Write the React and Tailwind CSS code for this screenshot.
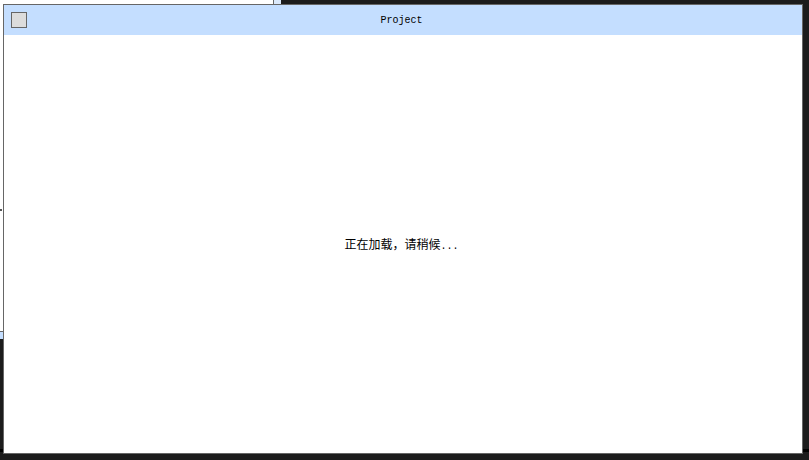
export default function App() {
  return (
    <div className="relative h-[460px] w-[809px] overflow-hidden bg-[#1c1c1c]">
      {/* window behind */}
      <div className="absolute left-0 top-0 flex h-[339px] w-[281px] flex-col">
        <div className="flex flex-1">
          <div className="flex-1 border-r border-b border-[#666666] bg-white" />
          <div className="w-[7px] bg-[#dbe9fb]" />
        </div>
        <div className="h-[7px] bg-[#c4deff]" />
      </div>
      <div className="absolute left-0 top-[209px] h-[2px] w-[2px] bg-[#555555]" />
      <div className="absolute left-0 top-[449px] h-[3px] w-[809px] bg-black" />
      {/* foreground window */}
      <div className="absolute left-[3px] top-[4px] flex h-[450px] w-[800px] flex-col border border-[#666666] bg-white">
        <div className="relative flex h-[30px] items-center justify-center bg-[#c4deff] pr-[3px]">
          <div className="absolute left-[7px] top-[7px] h-4 w-4 border border-[#666666] bg-[#dcdcdc]" />
          <span className="font-['Liberation_Mono',monospace] text-[10px] text-black">Project</span>
        </div>
        <div className="flex flex-1 items-center justify-center pr-[3px]">
          <span className="font-['Noto_Sans_CJK_SC',sans-serif] text-[12px] text-black">
            正在加载，请稍候<span className="font-['Liberation_Mono',monospace] text-[10px]">...</span>
          </span>
        </div>
      </div>
    </div>
  );
}
